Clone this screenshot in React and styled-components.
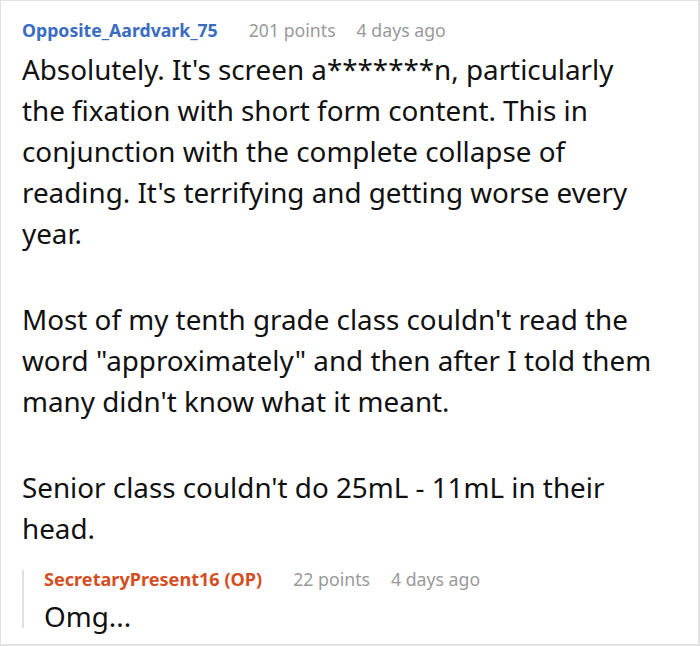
import React from "react";
import styled, { createGlobalStyle } from "styled-components";

const Global = createGlobalStyle`
  html, body { margin: 0; padding: 0; background: #fff; }
  body { font-family: "Noto Sans", "Open Sans", sans-serif; }
`;

const Frame = styled.div`
  box-sizing: border-box;
  width: 700px;
  height: 646px;
  border: 1px solid #e3e3e3;
  border-right-width: 2px;
  border-bottom-width: 2px;
  padding: 17px 40px 0 21px;
  overflow: hidden;
`;

const Meta = styled.div`
  display: flex;
  align-items: baseline;
  font-size: 17.7px;
  line-height: ${(p) => p.$lh || "24px"};
  margin-top: ${(p) => p.$mt || "0"};
  white-space: nowrap;
`;

const Author = styled.span`
  font-weight: 700;
  font-size: ${(p) => p.$size || "17.7px"};
  color: ${(p) => p.$color};
  margin-right: 31px;
`;

const Info = styled.span`
  color: #999;
  margin-right: 21px;
`;

const Body = styled.div`
  margin-top: 7px;
  font-size: 27.8px;
  line-height: 41px;
  color: #111;
`;

const Para = styled.p`
  margin: 0 0 45px;
  &:last-child { margin-bottom: 0; }
`;

const Reply = styled.div`
  margin-top: 28px;
  border-left: 2px solid #e0e0e0;
  padding-left: 20px;
`;

const ReplyBody = styled.div`
  margin-top: 16px;
  font-size: 27.8px;
  line-height: 24px;
  color: #111;
`;

export default function App() {
  return (
    <>
      <Global />
      <Frame>
        <Meta>
          <Author $color="#3a6dc2">Opposite_Aardvark_75</Author>
          <Info>201 points</Info>
          <Info>4 days ago</Info>
        </Meta>
        <Body>
          <Para>
            Absolutely. It's screen a*******n, particularly the fixation with
            short form content. This in conjunction with the complete collapse
            of reading. It's terrifying and getting worse every year.
          </Para>
          <Para>
            Most of my tenth grade class couldn't read the word
            "approximately" and then after I told them many didn't know what
            it meant.
          </Para>
          <Para>Senior class couldn't do 25mL - 11mL in their head.</Para>
        </Body>
        <Reply>
          <Meta $lh="18px" $mt="-7px">
            <Author $color="#d54e1f" $size="18.1px">SecretaryPresent16 (OP)</Author>
            <Info>22 points</Info>
            <Info>4 days ago</Info>
          </Meta>
          <ReplyBody>Omg...</ReplyBody>
        </Reply>
      </Frame>
    </>
  );
}
